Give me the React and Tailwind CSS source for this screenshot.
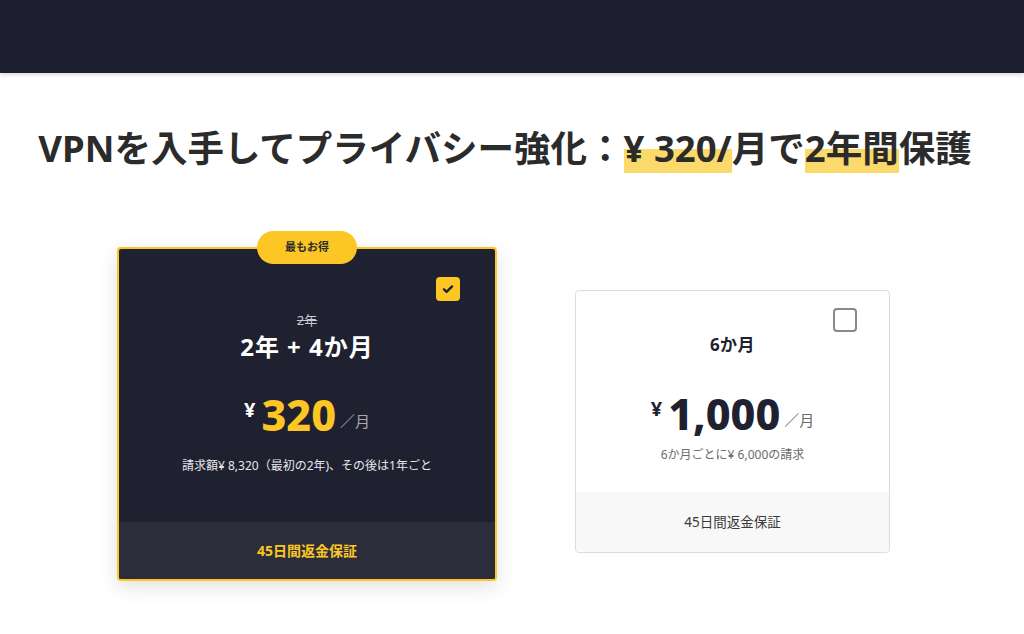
import React from 'react';

const font = { fontFamily: '"Noto Sans", "Noto Sans CJK JP", sans-serif' };

const CheckIcon = () => (
    <svg width="14" height="14" viewBox="0 0 24 24" fill="none" stroke="#1f2131" strokeWidth="4" strokeLinecap="round" strokeLinejoin="round">
        <path d="M5 12.5l4.5 4.5L19 7.5" />
    </svg>
);

const App = () => {
    return (
        <div className="min-h-[634px] w-[1024px] bg-white" style={font}>
            {/* top bar */}
            <div className="h-[73px] bg-[#1e1f2e] shadow-[0_2px_4px_rgba(0,0,0,0.15)]" />

            {/* headline */}
            <h1 className="mt-[52px] pr-[14px] text-center text-[36.5px] font-bold leading-[46px] text-[#2b2b2b]">
                VPNを入手してプライバシー強化：
                <span className="bg-[linear-gradient(transparent_52%,#fbd96a_52%)]">¥ 320/</span>
                月で
                <span className="bg-[linear-gradient(transparent_52%,#fbd96a_52%)]">2年間</span>
                保護
            </h1>

            {/* plans */}
            <div className="mt-[76px] flex items-start gap-[78px] pl-[117px]">
                {/* best plan */}
                <div className="relative w-[380px]">
                    <div className="absolute left-1/2 top-[-16px] z-10 flex h-[33px] w-[100px] -translate-x-1/2 items-center justify-center rounded-full bg-[#fcc624] text-[11px] font-bold text-[#2b2b2b]">
                        最もお得
                    </div>
                    <div className="flex h-[334px] flex-col overflow-hidden rounded-[4px] border-2 border-[#fcc624] bg-[#1f2131] shadow-[0_6px_20px_rgba(0,0,0,0.12)]">
                        <div className="relative flex flex-1 flex-col items-center">
                            <div className="absolute right-[35px] top-[28px] flex h-[24px] w-[24px] items-center justify-center rounded-[4px] bg-[#fcc624]">
                                <CheckIcon />
                            </div>
                            <div className="mt-[62px] text-[13px] leading-[18px] text-[#c9cad0] line-through">2年</div>
                            <div className="mt-[3px] text-[24px] font-bold leading-[30px] tracking-[1px] text-white">2年 + 4か月</div>
                            <div className="mt-[27px] flex items-start">
                                <span className="mr-[6px] mt-[11px] text-[20px] font-bold leading-none text-white">¥</span>
                                <span className="text-[43px] font-extrabold leading-[52px] text-[#fcc624]">320</span>
                                <span className="ml-[4px] mt-[22px] text-[15px] leading-[20px] text-[#a8a9b0]">／月</span>
                            </div>
                            <div className="mt-[16px] text-[12px] leading-[18px] text-[#e6e6ea]">
                                請求額¥ 8,320（最初の2年)、その後は1年ごと
                            </div>
                        </div>
                        <div className="flex h-[57px] items-center justify-center bg-[#2b2d3b] text-[14px] font-bold text-[#fcc624]">
                            45日間返金保証
                        </div>
                    </div>
                </div>

                {/* six month plan */}
                <div className="mt-[43px] flex h-[263px] w-[315px] flex-col overflow-hidden rounded-[4px] border border-[#dcdcdc] bg-white">
                    <div className="relative flex flex-1 flex-col items-center">
                        <div className="absolute right-[32px] top-[17px] h-[24px] w-[24px] rounded-[4px] border-2 border-[#8a8a8a]" />
                        <div className="mt-[43px] text-[17px] font-bold leading-[22px] tracking-[0.5px] text-[#1f2131]">6か月</div>
                        <div className="mt-[32px] flex items-start">
                            <span className="mr-[6px] mt-[11px] text-[20px] font-bold leading-none text-[#1f2131]">¥</span>
                            <span className="text-[43px] font-extrabold leading-[52px] text-[#1f2131]">1,000</span>
                            <span className="ml-[4px] mt-[22px] text-[15px] leading-[20px] text-[#6b6b6b]">／月</span>
                        </div>
                        <div className="mt-[6px] text-[12px] leading-[18px] text-[#6b6b6b]">6か月ごとに¥ 6,000の請求</div>
                    </div>
                    <div className="flex h-[60px] items-center justify-center bg-[#f8f8f8] text-[13.5px] text-[#3a3a3a]">
                        45日間返金保証
                    </div>
                </div>
            </div>
        </div>
    );
};

export default App;
